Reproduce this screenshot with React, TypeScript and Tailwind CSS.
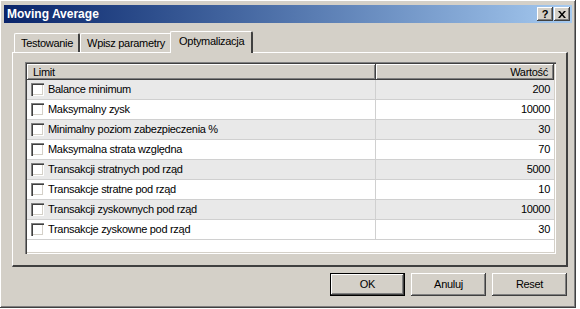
const rows = [
  { label: 'Balance minimum', value: '200' },
  { label: 'Maksymalny zysk', value: '10000' },
  { label: 'Minimalny poziom zabezpieczenia %', value: '30' },
  { label: 'Maksymalna strata względna', value: '70' },
  { label: 'Transakcji stratnych pod rząd', value: '5000' },
  { label: 'Transakcje stratne pod rząd', value: '10' },
  { label: 'Transakcji zyskownych pod rząd', value: '10000' },
  { label: 'Transakcje zyskowne pod rząd', value: '30' },
];

const raised =
  'shadow-[inset_-1px_-1px_#404040,inset_1px_1px_#ffffff,inset_-2px_-2px_#808080,inset_2px_2px_#d4d0c8]';

function Checkbox() {
  return (
    <span className="w-[13px] h-[13px] shrink-0 bg-white shadow-[inset_1px_1px_#808080,inset_2px_2px_#404040,inset_-1px_-1px_#ffffff,inset_-2px_-2px_#d4d0c8]" />
  );
}

function Tab({ label, active }: { label: string; active?: boolean }) {
  return (
    <div
      className={
        'flex items-center pl-[6px] pr-[5px] rounded-t-[2px] bg-[#d4d0c8] border-t border-l border-white border-r-2 border-r-[#404040] ' +
        (active ? 'h-[22px] -mb-px relative z-10 -mx-[2px] pl-[8px] pr-[7px] pb-[3px]' : 'h-[19px]')
      }
    >
      {label}
    </div>
  );
}

function Button({ label, primary }: { label: string; primary?: boolean }) {
  return (
    <button
      className={
        'w-[75px] h-[23px] flex items-center justify-center bg-[#d4d0c8] ' +
        (primary ? 'border border-black ' : '') +
        raised
      }
    >
      {label}
    </button>
  );
}

export default function App() {
  return (
    <div
      className="w-[580px] h-[309px] bg-white text-[11px] text-black tracking-[-0.3px]"
      style={{ fontFamily: '"Liberation Sans", Arial, sans-serif' }}
    >
      <div className={'w-[576px] h-[308px] bg-[#d4d0c8] p-[4px] flex flex-col ' + raised}>
        {/* Title bar */}
        <div className="h-[18px] mt-[1px] flex items-center justify-between pl-[3px] pr-[2px] bg-gradient-to-r from-[#0a246a] to-[#a6caf0]">
          <span className="text-white font-bold text-[12px] tracking-[0px]">Moving Average</span>
          <div className="flex gap-[1px]">
            <div className={'w-[16px] h-[14px] bg-[#d4d0c8] flex items-center justify-center font-bold text-[11px] leading-none ' + raised}>?</div>
            <div className={'w-[16px] h-[14px] bg-[#d4d0c8] flex items-center justify-center ' + raised}>
              <svg width="8" height="7" viewBox="0 0 8 7">
                <path d="M0 0h2l2 2.5L6 0h2L5 3.5 8 7H6L4 4.5 2 7H0l3-3.5z" fill="#000" />
              </svg>
            </div>
          </div>
        </div>

        {/* Body */}
        <div className="flex flex-col pl-[8px] pr-[4px] pt-[8px]">
          <div className="flex items-end h-[21px] pl-[2px]">
            <Tab label="Testowanie" />
            <Tab label="Wpisz parametry" />
            <Tab label="Optymalizacja" active />
          </div>

          <div className="h-[215px] border-t border-l border-white border-r-2 border-r-[#404040] border-b-2 border-b-[#404040] pt-[9px] pl-[12px] pr-[10px] pb-[10px]">
            <div className="h-[192px] flex flex-col bg-white shadow-[inset_1px_1px_#808080,inset_2px_2px_#404040,inset_-1px_-1px_#ffffff,inset_-2px_-2px_#d4d0c8] p-[2px]">
              <div className="flex h-[16px] shrink-0">
                <div className={'w-[349px] bg-[#d4d0c8] flex items-center pl-[6px] ' + raised}>Limit</div>
                <div className={'flex-1 bg-[#d4d0c8] flex items-center justify-end pr-[6px] ' + raised}>Wartość</div>
              </div>
              {rows.map((r, i) => (
                <div
                  key={r.label}
                  className={'flex h-[20px] shrink-0 border-b border-[#d0d0d0] ' + (i % 2 === 0 ? 'bg-[#e9e9e9]' : 'bg-white')}
                >
                  <div className="w-[349px] flex items-center gap-[4px] pl-[4px] border-r border-[#d0d0d0]">
                    <Checkbox />
                    <span>{r.label}</span>
                  </div>
                  <div className="flex-1 flex items-center justify-end pr-[4px]">{r.value}</div>
                </div>
              ))}
            </div>
          </div>

          <div className="flex justify-end gap-[6px] pt-[6px] pr-[1px]">
            <Button label="OK" primary />
            <Button label="Anuluj" />
            <Button label="Reset" />
          </div>
        </div>
      </div>
    </div>
  );
}
